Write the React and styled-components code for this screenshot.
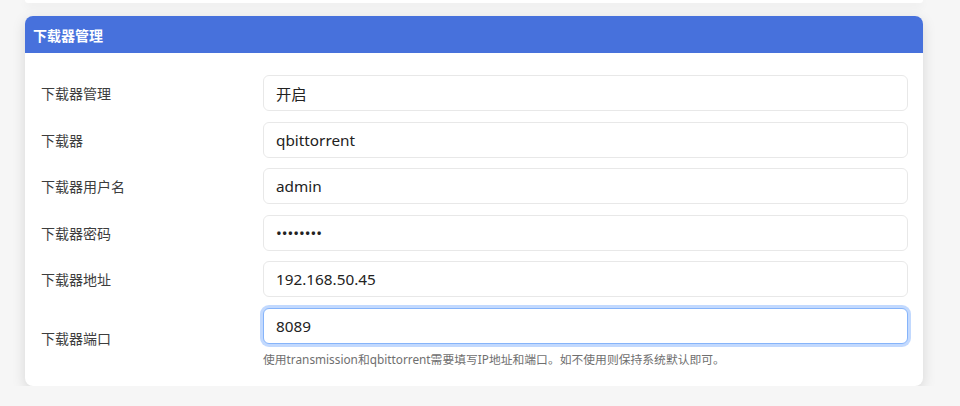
import React from "react";
import styled, { createGlobalStyle } from "styled-components";

const fields = [
    { label: "下载器管理", value: "开启" },
    { label: "下载器", value: "qbittorrent" },
    { label: "下载器用户名", value: "admin" },
    { label: "下载器密码", value: "password", type: "password" },
    { label: "下载器地址", value: "192.168.50.45" },
    {
        label: "下载器端口",
        value: "8089",
        focused: true,
        help: "使用transmission和qbittorrent需要填写IP地址和端口。如不使用则保持系统默认即可。",
    },
];

export default function App() {
    return (
        <>
            <Global />
            <Page>
                <PrevCard />
                <Card>
                    <Header>下载器管理</Header>
                    <Body>
                        {fields.map((f) => (
                            <Row key={f.label}>
                                <Label>{f.label}</Label>
                                <Field>
                                    <Input
                                        type={f.type || "text"}
                                        defaultValue={f.value}
                                        readOnly
                                        $focused={f.focused}
                                    />
                                    {f.help && <Help>{f.help}</Help>}
                                </Field>
                            </Row>
                        ))}
                    </Body>
                </Card>
            </Page>
        </>
    );
}

const Global = createGlobalStyle`
    body {
        margin: 0;
        background: #f6f6f6;
        font-family: "Noto Sans", "Noto Sans CJK SC", sans-serif;
    }
`;

const Page = styled.div`
    padding: 0 37px 0 25px;
`;

const PrevCard = styled.div`
    height: 3px;
    background: #fff;
    border-radius: 0 0 8px 8px;
    box-shadow: 0 3px 8px rgba(0, 0, 0, 0.08);
    margin-bottom: 13px;
`;

const Card = styled.div`
    background: #fff;
    border-radius: 8px;
    box-shadow: 0 4px 14px rgba(0, 0, 0, 0.13);
    overflow: hidden;
`;

const Header = styled.div`
    height: 37px;
    display: flex;
    align-items: center;
    padding-left: 8px;
    background: #4771dc;
    color: #fff;
    font-size: 14px;
    font-weight: 700;
`;

const Body = styled.div`
    display: flex;
    flex-direction: column;
    gap: 10.5px;
    padding: 22px 15px 18px 16px;
`;

const Row = styled.div`
    display: grid;
    grid-template-columns: 222px 1fr;
    align-items: center;
`;

const Label = styled.div`
    font-size: 14px;
    color: #3d3d3d;
`;

const Field = styled.div`
    display: flex;
    flex-direction: column;
`;

const Input = styled.input`
    box-sizing: border-box;
    height: 36px;
    padding: 0 12px;
    border: 1px solid ${(p) => (p.$focused ? "#86b4fa" : "#e8e8e8")};
    border-radius: 6px;
    box-shadow: ${(p) => (p.$focused ? "0 0 0 3px rgba(80, 145, 252, 0.35)" : "none")};
    font-family: "Noto Sans", "Noto Sans CJK SC", sans-serif;
    font-size: 15.3px;
    color: #222;
    background: #fff;
    outline: none;
`;

const Help = styled.div`
    margin-top: 6px;
    font-size: 11.8px;
    line-height: 18px;
    color: #6f6f6f;
`;
